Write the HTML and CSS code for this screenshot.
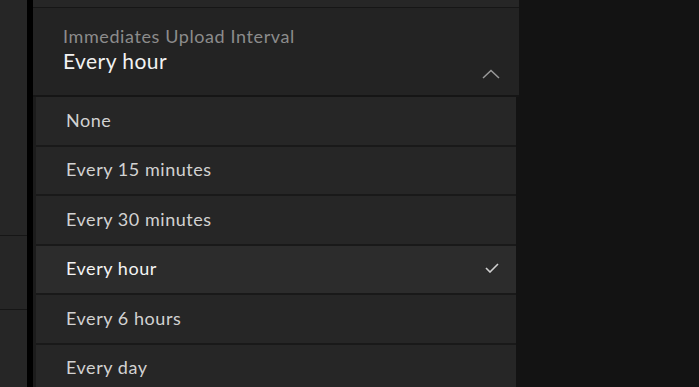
FILE: index.html
```html
<!DOCTYPE html>
<html>
<head>
<meta charset="utf-8">
<link rel="stylesheet" href="styles.css">
</head>
<body>
<div class="app">
  <div class="side">
    <div class="side-top"></div>
    <div class="side-mid"></div>
    <div class="side-bot"></div>
  </div>
  <div class="gutter"></div>
  <div class="main">
    <div class="stub"></div>
    <div class="field">
      <div class="field-text">
        <div class="label">Immediates Upload Interval</div>
        <div class="value">Every hour</div>
      </div>
      <svg class="chev" width="18" height="10" viewBox="0 0 18 10"><path d="M1 9 L9 1.5 L17 9" fill="none" stroke="#9a9a9a" stroke-width="1.5"/></svg>
    </div>
    <div class="list">
      <div class="opt">None</div>
      <div class="opt">Every 15 minutes</div>
      <div class="opt">Every 30 minutes</div>
      <div class="opt selected">Every hour
        <svg class="check" width="14" height="10" viewBox="0 0 14 10"><path d="M1 5 L5 9 L13 1" fill="none" stroke="#d0d0d0" stroke-width="1.6"/></svg>
      </div>
      <div class="opt">Every 6 hours</div>
      <div class="opt">Every day</div>
    </div>
  </div>
  <div class="rest"></div>
</div>
</body>
</html>
```
FILE: styles.css
```css
* { box-sizing: border-box; }
html, body { margin: 0; padding: 0; background: #131313; overflow: hidden; }
body { font-family: Lato, "Open Sans", sans-serif; }
.app { display: flex; width: 699px; height: 387px; }
.side { width: 27px; flex-shrink: 0; background: #262626; display: flex; flex-direction: column; }
.side-top { height: 236px; flex-shrink: 0; border-bottom: 1px solid #161616; }
.side-mid { height: 74px; flex-shrink: 0; border-bottom: 1px solid #161616; }
.side-bot { flex: 1; }
.gutter { width: 6px; flex-shrink: 0; background: #000; }
.main { width: 486px; flex-shrink: 0; display: flex; flex-direction: column; background: #131313; overflow: hidden; }
.stub { height: 8px; flex-shrink: 0; background: #262626; border-bottom: 1px solid #161616; }
.field { height: 89px; flex-shrink: 0; background: #232323; border-bottom: 2px solid #151515; display: flex; align-items: flex-end; justify-content: space-between; padding: 0 19px 16px 30px; }
.field-text { align-self: flex-start; padding-top: 17px; }
.label { font-size: 18px; color: #8c8c8c; letter-spacing: 0.6px; line-height: 22px; }
.value { font-size: 21px; color: #f2f2f2; letter-spacing: 0.45px; line-height: 26px; margin-top: 1px; }
.chev { display: block; }
.list { flex-shrink: 0; margin-right: 3px; border-left: 3px solid #1c1c1c; background: #262626; }
.opt { height: 49.5px; flex-shrink: 0; border-bottom: 2px solid #191919; display: flex; align-items: center; justify-content: space-between; padding: 0 17px 2px 30px; font-size: 18px; color: #d2d2d2; letter-spacing: 0.55px; }
.opt.selected { background: #2c2c2c; color: #f4f4f4; }
.check { display: block; }
.rest { flex: 1; background: #131313; }
```
